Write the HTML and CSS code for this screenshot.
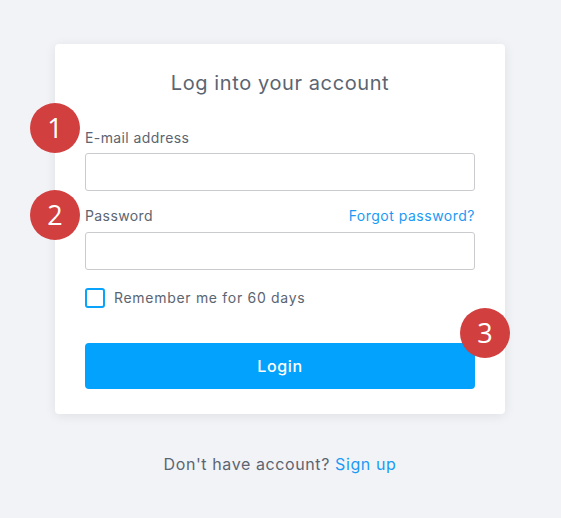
FILE: index.html
```html
<!DOCTYPE html>
<html lang="en">
<head>
    <meta charset="UTF-8">
    <meta name="viewport" content="width=device-width, initial-scale=1.0">
    <title>Log in</title>
    <link rel="stylesheet" href="styles.css">
</head>
<body>

<div class="card">
    <h1>Log into your account</h1>

    <div class="form-group">
        <label for="email">E-mail address</label>
        <input type="email" id="email">
        <span class="badge badge-1">1</span>
    </div>

    <div class="form-group">
        <div class="label-row">
            <label for="password">Password</label>
            <a href="#" class="link">Forgot password?</a>
        </div>
        <input type="password" id="password">
        <span class="badge badge-2">2</span>
    </div>

    <label class="remember">
        <span class="checkbox"></span>
        Remember me for 60 days
    </label>

    <div class="actions">
        <button type="button" class="btn">Login</button>
        <span class="badge badge-3">3</span>
    </div>
</div>

<p class="signup">Don't have account? <a href="#" class="link">Sign up</a></p>

</body>
</html>
```

FILE: styles.css
```css
body {
    font-family: Inter, "DejaVu Sans", sans-serif;
    background-color: #f2f3f7;
    color: #5b6571;
    margin: 0;
    padding: 44px 1px 0 0;
}
.card {
    position: relative;
    width: 390px;
    margin: 0 auto;
    padding: 26px 30px 25px;
    background-color: white;
    border-radius: 4px;
    box-shadow: 0 2px 12px rgba(0, 0, 0, 0.08);
}
h1 {
    margin: 0 0 33px;
    text-align: center;
    font-size: 20px;
    font-weight: 400;
    line-height: 26px;
    letter-spacing: 0.6px;
}
.form-group {
    position: relative;
    margin-bottom: 16px;
}
.label-row {
    display: flex;
    justify-content: space-between;
    align-items: baseline;
    margin-bottom: 7px;
}
label {
    display: block;
    font-size: 14px;
    line-height: 18px;
    letter-spacing: 0.4px;
    margin-bottom: 6px;
}
.label-row label {
    margin-bottom: 0;
}
.link {
    color: #1b9af5;
    text-decoration: none;
    font-size: 14px;
    letter-spacing: 0.5px;
}
input {
    display: block;
    box-sizing: border-box;
    width: 100%;
    height: 38px;
    border: 1px solid #c9cbce;
    border-radius: 3px;
    padding: 0 10px;
    font-size: 14px;
}
.remember {
    display: flex;
    align-items: center;
    gap: 9px;
    margin: 18px 0 35px;
    line-height: 20px;
    letter-spacing: 0.7px;
    cursor: pointer;
}
.checkbox {
    box-sizing: border-box;
    width: 20px;
    height: 20px;
    border: 2px solid #0aa3fb;
    border-radius: 3px;
}
.actions {
    position: relative;
}
.btn {
    display: block;
    width: 100%;
    height: 46px;
    border: 0;
    border-radius: 4px;
    background-color: #03a2fc;
    color: white;
    font-family: inherit;
    font-size: 16px;
    font-weight: 500;
    letter-spacing: 0.6px;
}
.badge {
    position: absolute;
    width: 50px;
    height: 50px;
    border-radius: 50%;
    background-color: #d13f3f;
    color: white;
    font-family: "Open Sans", sans-serif;
    font-size: 27px;
    line-height: 50px;
    text-align: center;
}
.badge-1 {
    left: -55px;
    top: -26px;
}
.badge-2 {
    left: -55px;
    top: -17px;
}
.badge-3 {
    right: -35px;
    top: -35px;
}
.signup {
    margin: 40px 0 0;
    text-align: center;
    font-size: 16px;
    letter-spacing: 0.6px;
}
.signup .link {
    font-size: 16px;
    letter-spacing: 0.6px;
}
```
